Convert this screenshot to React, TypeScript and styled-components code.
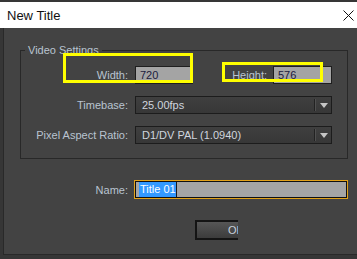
import * as React from 'react';
import styled, { createGlobalStyle } from 'styled-components';

const GlobalStyle = createGlobalStyle`
    html, body {
        margin: 0;
        padding: 0;
        background: #363636;
    }
    * {
        box-sizing: border-box;
    }
`;

const Window = styled.div`
    position: relative;
    width: 357px;
    height: 259px;
    padding-top: 2px;
    overflow: hidden;
    background: #363636;
    font-family: 'Liberation Sans', Arial, sans-serif;
    font-size: 11px;
`;

const TitleBar = styled.div`
    display: flex;
    align-items: center;
    justify-content: space-between;
    height: 26px;
    padding: 0 3px 0 7px;
    background: #ffffff;
    color: #111111;
    font-size: 13px;
`;

const CloseButton = styled.svg`
    width: 11px;
    height: 11px;
`;

const DialogBody = styled.div`
    height: 227px;
    margin-left: 3px;
    padding: 15px 9px 0 16px;
    background: #434343;
    border-left: 1px solid #292929;
    border-bottom: 1px solid #292929;
`;

const GroupBox = styled.fieldset`
    margin: 0;
    min-width: 0;
    padding: 9px 15px 14px 0;
    border: 1px solid #282828;
`;

const GroupTitle = styled.legend`
    margin-left: 4px;
    padding: 0 3px;
    line-height: 14px;
    color: #b9c3d1;
`;

const FormGrid = styled.div<{ labelWidth: number; gap: number }>`
    display: grid;
    grid-template-columns: ${(p) => p.labelWidth}px 1fr;
    column-gap: ${(p) => p.gap}px;
    row-gap: 12px;
    align-items: center;
`;

const Label = styled.div`
    text-align: right;
    color: #b9c3d1;
    white-space: nowrap;
`;

const SizeRow = styled.div`
    display: flex;
    align-items: center;
`;

const SizeLabel = styled(Label)`
    flex: 1;
    padding-right: 6px;
`;

const NumberField = styled.div<{ width: number }>`
    display: flex;
    align-items: center;
    width: ${(p) => p.width}px;
    height: 18px;
    padding-left: 4px;
    background: #a4a4a4;
    border: 1px solid #1e1e1e;
    color: #1b1b3c;
    font-size: 11px;
`;

const Select = styled.div`
    display: flex;
    align-items: stretch;
    height: 18px;
    background: linear-gradient(#3f3f3f, #373737);
    border: 1px solid #1c1c1c;
    color: #cfd5de;
`;

const SelectValue = styled.div`
    flex: 1;
    display: flex;
    align-items: center;
    padding-left: 6px;
`;

const SelectDivider = styled.div`
    width: 2px;
    margin: 2px 0;
    border-left: 1px solid #222222;
    border-right: 1px solid #505050;
`;

const SelectArrow = styled.div`
    width: 15px;
    display: flex;
    align-items: center;
    justify-content: center;
    &::after {
        content: '';
        border-left: 4px solid transparent;
        border-right: 4px solid transparent;
        border-top: 5px solid #c6c6c6;
        margin-top: 1px;
    }
`;

const NameSection = styled.div`
    margin-top: 21px;
`;

const NameField = styled.div`
    display: flex;
    align-items: center;
    height: 19px;
    padding-left: 4px;
    background: #a5a5a5;
    border: 1px solid #e3a21a;
    box-shadow: inset 0 0 0 1px #101010;
`;

const Selection = styled.span`
    padding: 1px 0 2px 1px;
    background: #3399ff;
    color: #ffffff;
    border-right: 1px solid #1a1a1a;
`;

const Footer = styled.div`
    margin-top: 21px;
    padding-left: 175px;
`;

const ButtonClip = styled.div`
    width: 43px;
    height: 20px;
    overflow: hidden;
`;

const Button = styled.button`
    width: 82px;
    height: 20px;
    padding: 0;
    border: 2px solid #141414;
    background: linear-gradient(#565656, #3c3c3c);
    color: #c9d1dc;
    font-family: inherit;
    font-size: 11px;
`;

const Highlight = styled.div<{ x: number; y: number; w: number; h: number }>`
    position: absolute;
    left: ${(p) => p.x}px;
    top: ${(p) => p.y}px;
    width: ${(p) => p.w}px;
    height: ${(p) => p.h}px;
    border: 3px solid #ffff00;
    pointer-events: none;
`;

const Dropdown: React.FC<{ value: string }> = ({ value }) => (
    <Select>
        <SelectValue>{value}</SelectValue>
        <SelectDivider />
        <SelectArrow />
    </Select>
);

export default function App() {
    return (
        <Window>
            <GlobalStyle />
            <TitleBar>
                <span>New Title</span>
                <CloseButton viewBox="0 0 11 11">
                    <path d="M0.5 0.5 L10.5 10.5 M10.5 0.5 L0.5 10.5" stroke="#111" strokeWidth="1" />
                </CloseButton>
            </TitleBar>
            <DialogBody>
                <GroupBox>
                    <GroupTitle>Video Settings</GroupTitle>
                    <FormGrid labelWidth={107} gap={7}>
                        <Label>Width:</Label>
                        <SizeRow>
                            <NumberField width={58}>720</NumberField>
                            <SizeLabel>Height:</SizeLabel>
                            <NumberField width={59}>576</NumberField>
                        </SizeRow>
                        <Label>Timebase:</Label>
                        <Dropdown value="25.00fps" />
                        <Label>Pixel Aspect Ratio:</Label>
                        <Dropdown value="D1/DV PAL (1.0940)" />
                    </FormGrid>
                </GroupBox>
                <NameSection>
                    <FormGrid labelWidth={108} gap={6}>
                        <Label>Name:</Label>
                        <NameField>
                            <Selection>Title 01</Selection>
                        </NameField>
                    </FormGrid>
                </NameSection>
                <Footer>
                    <ButtonClip>
                        <Button>OK</Button>
                    </ButtonClip>
                </Footer>
            </DialogBody>
            <Highlight x={63} y={53} w={130} h={30} />
            <Highlight x={222} y={62} w={101} h={20} />
        </Window>
    );
}
